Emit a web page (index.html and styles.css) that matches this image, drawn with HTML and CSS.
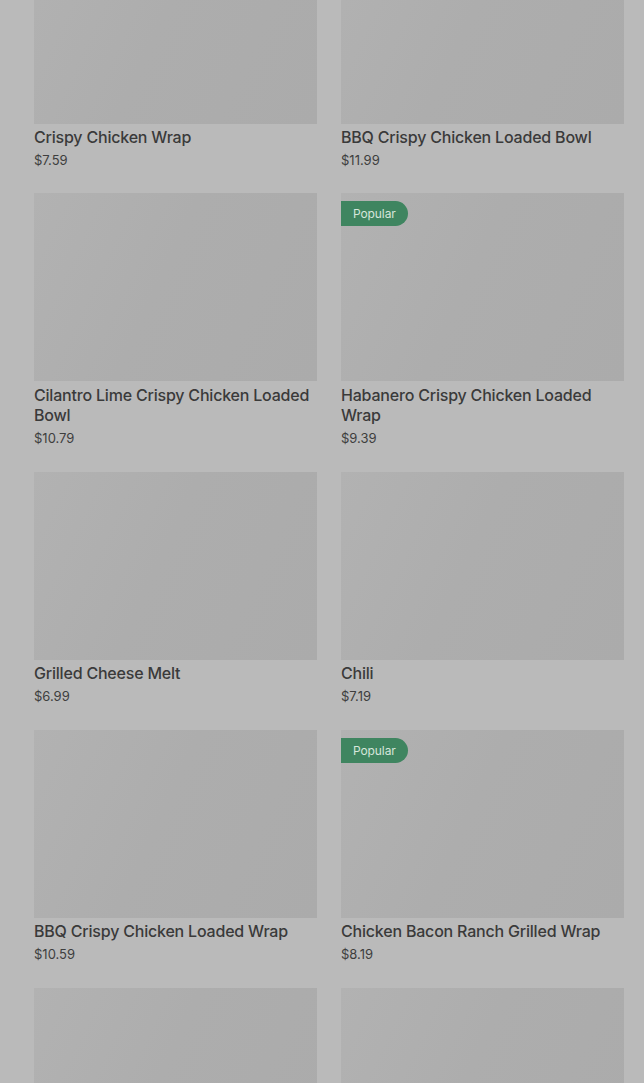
FILE: index.html
```html
<!DOCTYPE html>
<html lang="en">
<head>
<meta charset="utf-8">
<title>Menu</title>
<link rel="stylesheet" href="styles.css">
</head>
<body>
<main class="menu">
  <div class="grid">
    <article class="card"><div class="thumb"></div><h3 class="name">Crispy Chicken Wrap</h3><p class="price">$7.59</p></article>
    <article class="card"><div class="thumb"></div><h3 class="name">BBQ Crispy Chicken Loaded Bowl</h3><p class="price">$11.99</p></article>
    <article class="card tall"><div class="thumb"></div><h3 class="name">Cilantro Lime Crispy Chicken Loaded Bowl</h3><p class="price">$10.79</p></article>
    <article class="card tall"><div class="thumb"><span class="badge">Popular</span></div><h3 class="name">Habanero Crispy Chicken Loaded Wrap</h3><p class="price">$9.39</p></article>
    <article class="card"><div class="thumb"></div><h3 class="name">Grilled Cheese Melt</h3><p class="price">$6.99</p></article>
    <article class="card"><div class="thumb"></div><h3 class="name">Chili</h3><p class="price">$7.19</p></article>
    <article class="card"><div class="thumb"></div><h3 class="name">BBQ Crispy Chicken Loaded Wrap</h3><p class="price">$10.59</p></article>
    <article class="card"><div class="thumb"><span class="badge">Popular</span></div><h3 class="name">Chicken Bacon Ranch Grilled Wrap</h3><p class="price">$8.19</p></article>
    <article class="card"><div class="thumb"></div></article>
    <article class="card"><div class="thumb"></div></article>
  </div>
</main>
</body>
</html>
```

FILE: styles.css
```css
html, body {
  margin: 0;
  padding: 0;
  background: #bababa;
  overflow: hidden;
  height: 1083px;
}
body {
  font-family: Inter, Roboto, "Liberation Sans", sans-serif;
  color: #383838;
}
.menu {
  padding: 0 20px 0 34px;
  margin-top: -64px;
}
.grid {
  display: grid;
  grid-template-columns: 283px 283px;
  column-gap: 24px;
  row-gap: 24px;
  align-items: start;
}
.card {
  display: flex;
  flex-direction: column;
}
.thumb {
  position: relative;
  height: 188px;
  background: linear-gradient(115deg, #b2b2b2 0%, #adadad 45%, #ababab 100%);
}
.badge {
  position: absolute;
  left: 0;
  top: 8px;
  height: 25px;
  line-height: 25px;
  padding: 0 12px;
  background: #3f8560;
  color: #d6e6db;
  font-size: 12px;
  letter-spacing: -0.1px;
  border-radius: 0 13px 13px 0;
}
.name {
  margin: 3px 0 0;
  font-size: 16px;
  line-height: 20px;
  font-weight: 500;
  letter-spacing: -0.2px;
  color: #3a3a3a;
}
.tall .name {
  margin-top: 4px;
}
.price {
  margin: 4px 0 0;
  font-size: 13px;
  line-height: 18px;
  color: #3e3e3e;
}
.card:nth-child(n+3) .price {
  margin-bottom: 1px;
}
```
